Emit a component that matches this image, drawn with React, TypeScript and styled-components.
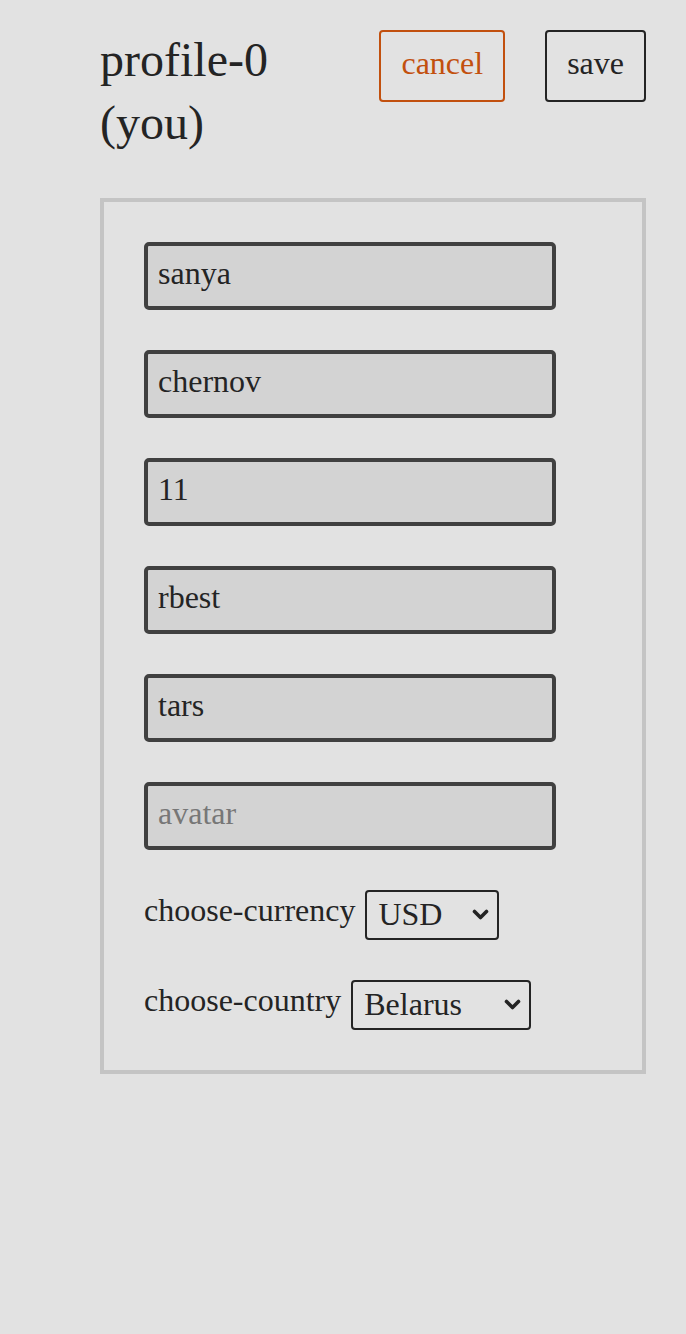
import styled, { createGlobalStyle } from "styled-components";

const GlobalStyle = createGlobalStyle`
  html, body {
    margin: 0;
    padding: 0;
    background: #e2e2e2;
  }
  body {
    font-family: "Liberation Serif", "Times New Roman", serif;
    color: #242424;
  }
`;

const Page = styled.div`
  min-height: 1334px;
  padding: 30px 40px 40px 100px;
  box-sizing: border-box;
`;

const Header = styled.div`
  display: flex;
  align-items: flex-start;
  justify-content: space-between;
`;

const Title = styled.h1`
  margin: -2px 0 0;
  width: 240px;
  font-size: 48px;
  font-weight: normal;
  line-height: 63px;
`;

const Actions = styled.div`
  display: flex;
  gap: 40px;
`;

const Button = styled.button<{ $tone?: string }>`
  height: 72px;
  padding: 0 20px 6px;
  box-sizing: border-box;
  background: transparent;
  border: 2px solid ${(props) => props.$tone || "#242424"};
  border-radius: 4px;
  color: ${(props) => props.$tone || "#242424"};
  font-family: "Liberation Serif", serif;
  font-size: 32px;
  cursor: pointer;
`;

const Panel = styled.form`
  margin-top: 44px;
  border: 4px solid #c4c4c4;
  padding: 40px;
  display: flex;
  flex-direction: column;
  gap: 40px;
`;

const Field = styled.input`
  width: 412px;
  height: 68px;
  box-sizing: border-box;
  padding: 0 10px 6px;
  background: #d3d3d3;
  border: 4px solid #404040;
  border-radius: 5px;
  color: #242424;
  font-family: "Liberation Serif", serif;
  font-size: 32px;
  outline: none;

  &::placeholder {
    color: #777;
  }
`;

const SelectRow = styled.label`
  display: flex;
  align-items: center;
  gap: 10px;
  font-size: 32px;
  line-height: 50px;
`;

const LabelText = styled.span`
  position: relative;
  top: -5px;
`;

const SelectBox = styled.span`
  position: relative;
  display: inline-flex;
`;

const Select = styled.select<{ $width: number }>`
  width: ${(props) => props.$width}px;
  height: 50px;
  padding: 0 30px 2px 11px;
  appearance: none;
  background: transparent;
  border: 2px solid #242424;
  border-radius: 4px;
  color: #242424;
  font-family: "Liberation Serif", serif;
  font-size: 32px;
`;

const Chevron = styled.svg`
  position: absolute;
  right: 10px;
  top: 19px;
  pointer-events: none;
`;

const fields = [
  { name: "firstName", value: "sanya" },
  { name: "lastName", value: "chernov" },
  { name: "age", value: "11" },
  { name: "login", value: "rbest" },
  { name: "nick", value: "tars" },
  { name: "avatar", value: "", placeholder: "avatar" },
];

const Dropdown = ({ width, value, options }: { width: number; value: string; options: string[] }) => (
  <SelectBox>
    <Select $width={width} defaultValue={value}>
      {options.map((option) => (
        <option key={option}>{option}</option>
      ))}
    </Select>
    <Chevron width="17" height="12" viewBox="0 0 17 12">
      <polyline points="2.5,2.5 8.5,8.5 14.5,2.5" fill="none" stroke="#242424" strokeWidth="3.6" strokeLinecap="round" strokeLinejoin="round" />
    </Chevron>
  </SelectBox>
);

const App = () => {
  return (
    <Page>
      <GlobalStyle />
      <Header>
        <Title>profile-0 (you)</Title>
        <Actions>
          <Button $tone="#c2500e">cancel</Button>
          <Button>save</Button>
        </Actions>
      </Header>
      <Panel onSubmit={(e) => e.preventDefault()}>
        {fields.map((field) => (
          <Field key={field.name} defaultValue={field.value} placeholder={field.placeholder} />
        ))}
        <SelectRow>
          <LabelText>choose-currency</LabelText>
          <Dropdown width={134} value="USD" options={["USD", "EUR", "BYN"]} />
        </SelectRow>
        <SelectRow>
          <LabelText>choose-country</LabelText>
          <Dropdown width={180} value="Belarus" options={["Belarus", "Poland", "Russia"]} />
        </SelectRow>
      </Panel>
    </Page>
  );
};

export default App;
